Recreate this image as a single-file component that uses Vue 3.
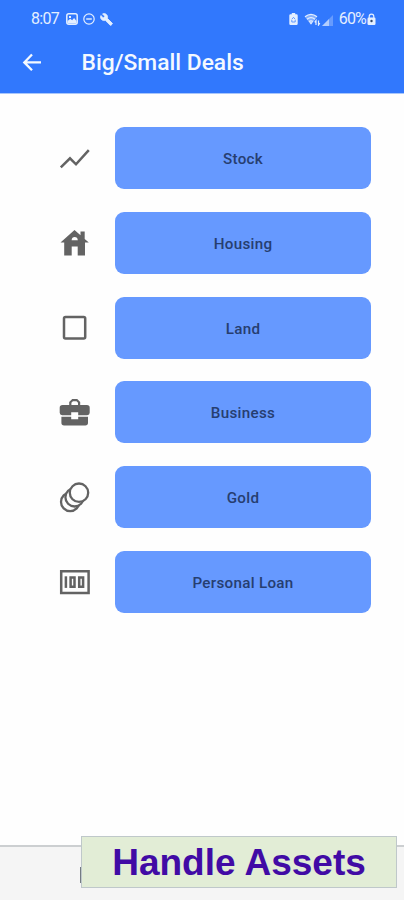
<template>
  <div class="screen">
    <header class="top">
      <div class="status-bar">
        <div class="status-left">
          <span class="clock">8:07</span>
          <svg width="12" height="12" viewBox="0 0 12 12">
            <rect x="0.8" y="0.8" width="10.4" height="10.4" rx="2" fill="none" stroke="currentColor" stroke-width="1.5" />
            <path d="M1.5 8l2.8-2.3 1.8 1.5 2-2.2L10.5 8v2.5h-9z" fill="currentColor" />
            <rect x="3" y="3" width="2" height="2" fill="currentColor" />
          </svg>
          <svg width="12" height="12" viewBox="0 0 12 12">
            <circle cx="6" cy="6" r="5.2" fill="none" stroke="currentColor" stroke-width="1.2" />
            <path d="M3.2 6h5.6" stroke="currentColor" stroke-width="1.4" />
          </svg>
          <svg width="13" height="13" viewBox="0 0 24 24">
            <path d="M22.7 19l-9.1-9.1c.9-2.3.4-5-1.5-6.9-2-2-5-2.4-7.4-1.3L9 6 6 9 1.6 4.7C.4 7.1.9 10.1 2.9 12.1c1.9 1.9 4.6 2.4 6.9 1.5l9.1 9.1c.4.4 1 .4 1.4 0l2.3-2.3c.5-.4.5-1.1.1-1.4z" fill="currentColor" stroke="currentColor" stroke-width="1.5" />
          </svg>
        </div>
        <div class="status-right">
          <svg width="9" height="12" viewBox="0 0 9 12">
            <path d="M2.8 0h3.4v1.3H7.5q1.2 0 1.2 1.2v8.3q0 1.2-1.2 1.2h-6Q.3 12 .3 10.8V2.5q0-1.2 1.2-1.2h1.3z" fill="currentColor" />
            <path d="M2.8 6.3l1.7-2 1.7 2M6.2 7v2H2.8V7" fill="none" stroke="#3178fd" stroke-width="0.7" />
          </svg>
          <svg class="wifi" width="17" height="13" viewBox="0 0 17 13">
            <path d="M.8 3.8Q7 -1 13.2 3.8L7 11.8z" fill="currentColor" opacity="0.45" />
            <path d="M1 3.8Q7 -1 13 3.8M3 6.2Q7 3 11 6.2M5 8.6Q7 7 9 8.6" fill="none" stroke="currentColor" stroke-width="1.3" />
            <path d="M5.3 9.2L7 11.5l1.7-2.3z" fill="currentColor" />
            <path d="M12 12V7.5l-1.3 1.8M14.5 7.5V12l1.3-1.8" fill="none" stroke="currentColor" stroke-width="1.2" />
          </svg>
          <svg class="signal" width="11" height="11" viewBox="0 0 11 11">
            <path d="M0 11L11 0v11z" fill="currentColor" opacity="0.3" />
            <path d="M0 11L7 4v7z" fill="currentColor" opacity="0.6" />
          </svg>
          <span class="percent">60%</span>
          <svg width="9" height="12" viewBox="0 0 9 12">
            <path d="M2.2 5V3.5a2.3 2.3 0 0 1 4.6 0V5" fill="none" stroke="currentColor" stroke-width="1.2" />
            <rect x="0.5" y="4.5" width="8" height="7.5" rx="1.2" fill="currentColor" />
            <circle cx="4.5" cy="8" r="1.2" fill="#344766" />
          </svg>
        </div>
      </div>
      <div class="toolbar">
        <svg class="back" width="20" height="20" viewBox="0 0 20 20">
          <path d="M10 1.5L2.3 9.4l7.7 7.8M2.5 9.4H19" fill="none" stroke="currentColor" stroke-width="2.3" />
        </svg>
        <h1 class="title">Big/Small Deals</h1>
      </div>
    </header>

    <main class="deals">
      <div v-for="deal in deals" :key="deal.name" class="deal">
        <svg class="deal-icon" width="32" height="32" viewBox="0 0 32 32">
          <path v-for="(d, i) in deal.fills" :key="'f' + i" :d="d" fill="currentColor" fill-rule="evenodd" />
          <path v-for="(d, i) in deal.lines" :key="'l' + i" :d="d" fill="none" stroke="currentColor" stroke-width="2.5" />
          <circle v-for="(c, i) in deal.coins" :key="'c' + i" :cx="c[0]" :cy="c[1]" r="9.2" class="coin" />
        </svg>
        <button class="deal-button">{{ deal.name }}</button>
      </div>
    </main>

    <footer class="bottom">
      <div class="cursor"></div>
      <div class="caption">Handle Assets</div>
    </footer>
  </div>
</template>

<script setup>
const deals = [
  {
    name: 'Stock',
    lines: ['M1.8 25.4L11 16.3l6 6L29.8 8.100']
  },
  {
    name: 'Housing',
    fills: [
      'M15.5 3l6 5.3V4.5h4.2v7.4l4.1 3.7H26V28.5h-7.3v-9h-6v9H5.2V15.6H1.5zM12.6 13.3h6.2q-.3-3.2-3.1-3.2t-3.1 3.2z'
    ]
  },
  {
    name: 'Land',
    lines: ['M6.5 5.1h18.2q1.5 0 1.5 1.5v18.4q0 1.5-1.5 1.5H6.5q-1.5 0-1.5-1.5v-18.4q0-1.5 1.5-1.5z']
  },
  {
    name: 'Business',
    fills: [
      'M10.2 9V6l3-3h5l3 3v3h6.7q2.8 0 2.8 2.8v5q0 2.4-2.5 2.4h-9v-3h-7v3h-9Q.7 19.2.7 16.8v-5Q.7 9 3.5 9zM12.4 9h6.6V6.8l-1.5-1.5h-3.6l-1.5 1.5z',
      'M2.4 20.8h9.8v2.4h7v-2.4H29v6q0 2.7-2.7 2.7H5.1q-2.7 0-2.7-2.7z'
    ]
  },
  {
    name: 'Gold',
    coins: [
      [11.2, 20.9],
      [15.6, 16.3],
      [20, 11.7]
    ]
  },
  {
    name: 'Personal Loan',
    lines: [
      'M2.2 5.3h27.4v21.6H2.2z',
      'M6.9 10.3v11.6',
      'M11.6 11.5h3.9v9.2h-3.9z',
      'M20.2 11.5h3.9v9.2h-3.9z'
    ]
  }
]
</script>

<style>
body {
  margin: 0;
}
</style>

<style scoped>
.screen {
  width: 404px;
  height: 900px;
  display: flex;
  flex-direction: column;
  overflow: hidden;
  background: #fefefe;
  font-family: Roboto, sans-serif;
}

.top {
  height: 93px;
  flex: none;
  background: #3178fd;
  border-bottom: 1px solid #a8c6fb;
  color: #e4efff;
}

.status-bar {
  height: 38px;
  padding: 0 28px 0 31px;
  display: flex;
  align-items: center;
  justify-content: space-between;
}

.status-left,
.status-right {
  display: flex;
  align-items: center;
}

.status-left {
  gap: 5px;
}

.clock,
.percent {
  font-size: 16px;
  line-height: 18px;
  letter-spacing: -0.7px;
}

.clock {
  margin-right: 2px;
}

.wifi {
  margin-left: 6px;
}

.signal {
  margin: 2px 5px 0 1px;
}

.percent {
  letter-spacing: -0.8px;
  margin-right: 1px;
}

.status-right .percent {
  margin-left: 1px;
}

.toolbar {
  height: 50px;
  padding-left: 22px;
  display: flex;
  align-items: center;
  color: #f4f9ff;
}

.title {
  margin: 0 0 0 39.5px;
  font-size: 22.8px;
  font-weight: 500;
  line-height: 28px;
  white-space: nowrap;
}

.deals {
  flex: 1;
  padding: 33px 33px 0 59px;
  display: flex;
  flex-direction: column;
  gap: 22.8px;
}

.deal {
  height: 62px;
  display: flex;
  align-items: center;
  gap: 24px;
}

.deal-icon {
  flex: none;
  color: #636363;
}

.coin {
  fill: #fefefe;
  stroke: currentColor;
  stroke-width: 2.3;
}

.deal-button {
  flex: 1;
  height: 62px;
  padding: 2px 0 0;
  border: 0;
  border-radius: 9px;
  background: #6699ff;
  color: #263e70;
  font-family: inherit;
  font-size: 15.2px;
  font-weight: 500;
  letter-spacing: 0.3px;
}

.bottom {
  position: relative;
  height: 53px;
  flex: none;
  border-top: 2px solid #cccfd1;
  background: #f5f5f5;
}

.cursor {
  position: absolute;
  left: 80px;
  top: 20px;
  width: 2px;
  height: 16px;
  background: #747b83;
}

.caption {
  position: absolute;
  left: 81px;
  top: -11px;
  width: 314px;
  height: 50px;
  border: 1px solid #bfc8ca;
  background: #e2edd6;
  color: #410ba5;
  font-family: "Liberation Sans", Arial, sans-serif;
  font-size: 37px;
  font-weight: 700;
  line-height: 52px;
  text-align: center;
  white-space: nowrap;
}
</style>
